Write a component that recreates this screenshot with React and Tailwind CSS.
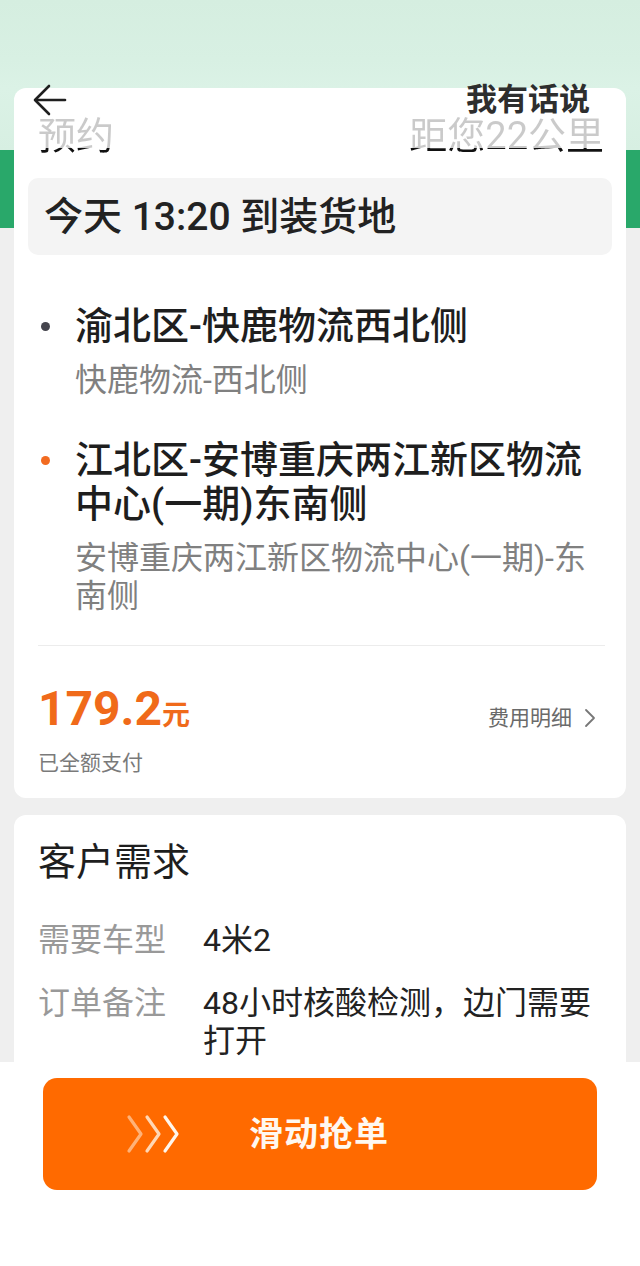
const Chevrons = () => (
    <svg width="56" height="40" viewBox="0 0 56 40" fill="none" strokeWidth="3.2" strokeLinecap="round" strokeLinejoin="round">
        <path d="M4 3 L16 20 L4 37" stroke="#ffd2ab" opacity="0.7"/>
        <path d="M22 3 L34 20 L22 37" stroke="#ffe3c9" opacity="0.9"/>
        <path d="M40 3 L52 20 L40 37" stroke="#fff6ec"/>
    </svg>
)

const BackArrow = () => (
    <svg width="34" height="32" viewBox="0 0 34 32" fill="none" stroke="#1f1f1f" strokeWidth="2.6" strokeLinecap="round" strokeLinejoin="round">
        <path d="M32 16 H3"/>
        <path d="M16 2 L2 16 L16 30"/>
    </svg>
)

const App = () => (
    <div className="w-[640px] h-[1266px] overflow-hidden flex flex-col font-['Roboto','Noto_Sans_CJK_SC',sans-serif] bg-[linear-gradient(to_bottom,#d5eee0_0px,#d8f0e3_60px,#dbf2e6_88px,#d7efe2_150px,#29a86a_150px,#29a86a_228px,#efefef_228px)]">
        {/* order card */}
        <div className="mx-[14px] mt-[88px] h-[710px] shrink-0 bg-white rounded-[12px] flex flex-col">
            <div className="-mt-1 h-[32px] flex items-center justify-between pl-[19px] pr-[36px]">
                <BackArrow/>
                <span className="text-[31px] leading-[32px] font-bold text-[#2e2e2e]">我有话说</span>
            </div>
            <div className="h-[40px] flex items-center justify-between pl-[24px] pr-[22px] text-[38px] leading-[40px]">
                <span className="bg-[linear-gradient(to_bottom,#cacaca_80%,#111_80%)] bg-clip-text text-transparent">预约</span>
                <span className="bg-[linear-gradient(to_bottom,#cacaca_80%,#111_80%)] bg-clip-text text-transparent">距您22公里</span>
            </div>
            <div className="mx-[14px] mt-[22px] h-[77px] rounded-[10px] bg-[#f4f4f4] flex items-center pl-[16px]">
                <span className="text-[39px] leading-[44px] font-medium text-[#222]">今天 13:20 到装货地</span>
            </div>

            <div className="mt-[49px] flex pl-[27px] pr-[14px]">
                <div className="w-[9px] h-[44px] flex items-center shrink-0">
                    <div className="w-[9px] h-[9px] rounded-full bg-[#45454d]"/>
                </div>
                <div className="ml-[25px] flex flex-col">
                    <span className="text-[38px] leading-[44px] font-medium text-[#1e1e1e]">渝北区-快鹿物流西北侧</span>
                    <span className="mt-[13px] text-[32px] leading-[38px] text-[#808080]">快鹿物流-西北侧</span>
                </div>
            </div>
            <div className="mt-[39px] flex pl-[27px] pr-[14px]">
                <div className="w-[9px] h-[44px] flex items-center shrink-0">
                    <div className="w-[9px] h-[9px] rounded-full bg-[#f26b21]"/>
                </div>
                <div className="ml-[25px] flex flex-col">
                    <span className="text-[38px] leading-[44px] font-medium text-[#1e1e1e]">江北区-安博重庆两江新区物流中心(一期)东南侧</span>
                    <span className="mt-[13px] text-[32px] leading-[38px] text-[#808080]">安博重庆两江新区物流中心(一期)-东南侧</span>
                </div>
            </div>

            <div className="mt-[30px] mx-[24px] mr-[21px] border-t border-[#ececec]"/>

            <div className="mt-[38px] h-[56px] flex items-center justify-between pl-[24px] pr-[30px]">
                <span className="text-[#f06a1a] font-bold leading-[56px] flex items-baseline">
                    <span className="text-[48px] leading-[56px]">179.2</span>
                    <span className="text-[28px] leading-[56px]">元</span>
                </span>
                <span className="flex items-center gap-[12px] text-[21px] leading-[28px] text-[#6a6a6a] pt-[12px]">
                    费用明细
                    <svg width="12" height="20" viewBox="0 0 12 20" fill="none" stroke="#777" strokeWidth="1.8" strokeLinecap="round" strokeLinejoin="round">
                        <path d="M2 2 L10 10 L2 18"/>
                    </svg>
                </span>
            </div>
            <span className="mt-[9px] pl-[24px] text-[21px] leading-[28px] text-[#7a7a7a]">已全额支付</span>
        </div>

        {/* customer requirements */}
        <div className="mx-[14px] mt-[17px] h-[247px] shrink-0 overflow-hidden bg-white rounded-t-[12px] flex flex-col pl-[24px] pr-[15px] pt-[25px]">
            <span className="text-[38px] leading-[44px] text-[#1e1e1e]">客户需求</span>
            <div className="mt-[37px] flex text-[32px] leading-[38px]">
                <span className="w-[165px] shrink-0 text-[#999]">需要车型</span>
                <span className="text-[#222]">4米2</span>
            </div>
            <div className="mt-[25px] flex text-[32px] leading-[38px]">
                <span className="w-[165px] shrink-0 text-[#999]">订单备注</span>
                <span className="text-[#222]">48小时核酸检测，边门需要打开</span>
            </div>
        </div>

        {/* slide bar */}
        <div className="flex-1 bg-white pt-[16px] px-[43px]">
            <div className="h-[112px] rounded-[14px] bg-[#ff6a00] flex items-center pl-[82px]">
                <Chevrons/>
                <span className="ml-[68px] text-[34px] font-bold text-[#fff8f0] tracking-[1px]">滑动抢单</span>
            </div>
        </div>
    </div>
)

export default App
